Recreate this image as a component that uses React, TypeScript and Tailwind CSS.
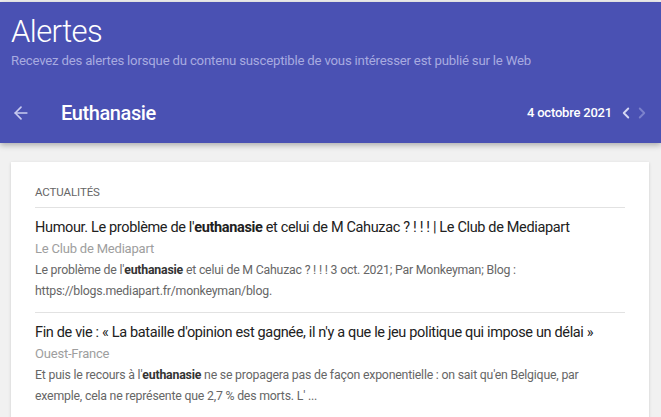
import { ArrowLeft, ChevronLeft, ChevronRight } from "lucide-react";

const results = [
  {
    title: (
      <>
        Humour. Le problème de l'<b className="font-bold">euthanasie</b> et celui de M Cahuzac ? ! ! ! | Le Club de Mediapart
      </>
    ),
    source: "Le Club de Mediapart",
    snippet: (
      <>
        Le problème de l'<b className="font-bold text-[#333]">euthanasie</b> et celui de M Cahuzac ? ! ! ! 3 oct. 2021; Par Monkeyman; Blog :
        https://blogs.mediapart.fr/monkeyman/blog.
      </>
    ),
  },
  {
    title: <>Fin de vie : « La bataille d'opinion est gagnée, il n'y a que le jeu politique qui impose un délai »</>,
    source: "Ouest-France",
    snippet: (
      <>
        Et puis le recours à l'<b className="font-bold text-[#333]">euthanasie</b> ne se propagera pas de façon exponentielle : on sait qu'en Belgique, par
        exemple, cela ne représente que 2,7 % des morts. L' ...
      </>
    ),
  },
];

export default function App() {
  return (
    <div className="h-[417px] w-[661px] overflow-hidden bg-[#f1f1f1] font-['Roboto',sans-serif]">
      <header className="mt-[2px] h-[141px] bg-[#4a51b3] px-[11px] pt-[11px] shadow-[0_2px_6px_rgba(0,0,0,0.3)]">
        <h1 className="text-[31px] font-light leading-[38px] tracking-[-0.6px] text-white">Alertes</h1>
        <p className="mt-[2px] text-[13.2px] leading-[16px] tracking-[-0.2px] text-[#a8abe0]">
          Recevez des alertes lorsque du contenu susceptible de vous intéresser est publié sur le Web
        </p>
        <div className="mt-[30px] flex h-[28px] items-center">
          <ArrowLeft className="h-[20px] w-[20px] text-[#c9cbf0]" strokeWidth={2} />
          <span className="ml-[30px] text-[20px] font-medium tracking-[-0.4px] text-white">Euthanasie</span>
          <span className="ml-auto text-[13px] font-medium tracking-[-0.2px] text-white">4 octobre 2021</span>
          <ChevronLeft className="ml-[5px] h-[18px] w-[18px] text-[#d5d7f3]" strokeWidth={2.5} />
          <ChevronRight className="ml-[-2px] mr-[-1px] h-[18px] w-[18px] text-[#7c82cc]" strokeWidth={2.5} />
        </div>
      </header>
      <main className="px-[11px] pt-[19px]">
        <section className="w-[638px] bg-white px-[24px] pt-[22px] pb-[20px] shadow-[0_1px_3px_rgba(0,0,0,0.15)]">
          <h2 className="pb-[7px] text-[11.5px] leading-[16px] uppercase tracking-[-0.1px] text-[#666]">Actualités</h2>
          {results.map((r, i) => (
            <article key={i} className="border-t border-[#e2e2e2] pt-[10px] pb-[11px]">
              <p className="text-[14.5px] leading-[20px] tracking-[-0.35px] text-[#212121]">{r.title}</p>
              <p className="mt-[1px] text-[13px] leading-[20px] tracking-[-0.2px] text-[#9e9e9e]">{r.source}</p>
              <p className="mt-[1px] text-[12.3px] leading-[20.5px] tracking-[-0.2px] text-[#666]">{r.snippet}</p>
            </article>
          ))}
        </section>
      </main>
    </div>
  );
}
